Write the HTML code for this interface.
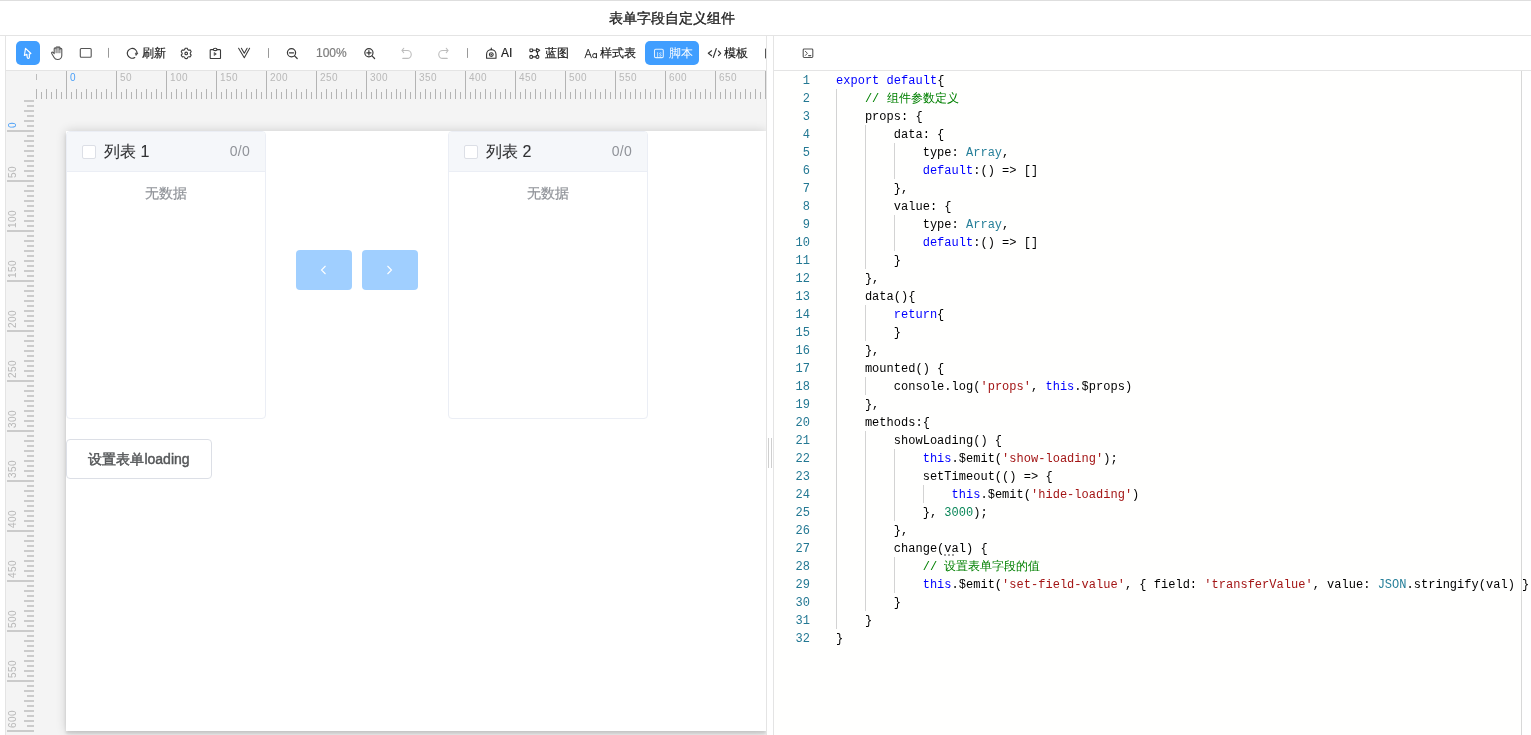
<!DOCTYPE html><html><head><meta charset="utf-8"><title>表单字段自定义组件</title><style>
*{box-sizing:border-box}
html,body{margin:0;padding:0}
body{width:1531px;height:735px;overflow:hidden;position:relative;background:#fff;font-family:"Liberation Sans",sans-serif;color:#333}
.abs{position:absolute}
.hl{position:absolute;height:1px;background:#e4e4e4}
.vl{position:absolute;width:1px;background:#e4e4e4}
.tb{position:absolute;font-size:12px;line-height:14px;color:#222;white-space:nowrap;-webkit-text-stroke:0.2px currentColor}
.ic{position:absolute}
.rt{position:absolute;background:#b4b4b4}
.rl{position:absolute;font-size:10px;line-height:10px;color:#b8b8b8;white-space:nowrap;letter-spacing:0.45px}
.code{position:absolute;left:0;font-family:"Liberation Mono",monospace;font-size:12px;line-height:18px;height:18px;white-space:pre;color:#000;letter-spacing:0.02px}
.ln{position:absolute;left:774px;width:36px;text-align:right;font-family:"Liberation Mono",monospace;font-size:12px;line-height:18px;color:#237893}
.k{color:#0000ff}.c{color:#008000}.s{color:#a31515}.y{color:#267f99}.n{color:#098658}
.g{position:absolute;width:1px;background:#d3d3d3}
</style></head><body><div id="root" style="position:absolute;left:0;top:0;width:1531px;height:735px;will-change:transform">
<div class="hl" style="left:0;top:0;width:1531px;background:#dedede"></div>
<div class="abs" style="left:609px;top:9px;font-size:14px;line-height:18px;color:#262626;-webkit-text-stroke:0.35px #262626;white-space:nowrap">表单字段自定义组件</div>
<div class="hl" style="left:0;top:35px;width:1531px"></div>
<div class="vl" style="left:5px;top:35px;height:700px"></div>
<div class="abs" style="left:6px;top:71px;width:760px;height:664px;background:#f4f4f4"></div>
<div class="hl" style="left:5px;top:70px;width:1526px"></div>
<div class="abs" style="left:66px;top:131px;width:700px;height:600px;background:#fff;box-shadow:0 0 10px rgba(0,0,0,0.16),0 3px 3px rgba(0,0,0,0.12)"></div>
<div class="rt" style="left:36px;top:89px;width:1px;height:10px"></div>
<div class="rt" style="left:41px;top:92px;width:1px;height:7px"></div>
<div class="rt" style="left:46px;top:89px;width:1px;height:10px"></div>
<div class="rt" style="left:51px;top:92px;width:1px;height:7px"></div>
<div class="rt" style="left:56px;top:89px;width:1px;height:10px"></div>
<div class="rt" style="left:61px;top:92px;width:1px;height:7px"></div>
<div class="rt" style="left:66px;top:71px;width:1px;height:28px"></div>
<div class="rl" style="left:70px;top:73px;color:#4a9ff7">0</div>
<div class="rt" style="left:71px;top:92px;width:1px;height:7px"></div>
<div class="rt" style="left:76px;top:89px;width:1px;height:10px"></div>
<div class="rt" style="left:81px;top:92px;width:1px;height:7px"></div>
<div class="rt" style="left:86px;top:89px;width:1px;height:10px"></div>
<div class="rt" style="left:91px;top:92px;width:1px;height:7px"></div>
<div class="rt" style="left:96px;top:89px;width:1px;height:10px"></div>
<div class="rt" style="left:101px;top:92px;width:1px;height:7px"></div>
<div class="rt" style="left:106px;top:89px;width:1px;height:10px"></div>
<div class="rt" style="left:111px;top:92px;width:1px;height:7px"></div>
<div class="rt" style="left:116px;top:71px;width:1px;height:28px"></div>
<div class="rl" style="left:120px;top:73px;color:#b8b8b8">50</div>
<div class="rt" style="left:121px;top:92px;width:1px;height:7px"></div>
<div class="rt" style="left:126px;top:89px;width:1px;height:10px"></div>
<div class="rt" style="left:131px;top:92px;width:1px;height:7px"></div>
<div class="rt" style="left:136px;top:89px;width:1px;height:10px"></div>
<div class="rt" style="left:141px;top:92px;width:1px;height:7px"></div>
<div class="rt" style="left:146px;top:89px;width:1px;height:10px"></div>
<div class="rt" style="left:151px;top:92px;width:1px;height:7px"></div>
<div class="rt" style="left:156px;top:89px;width:1px;height:10px"></div>
<div class="rt" style="left:161px;top:92px;width:1px;height:7px"></div>
<div class="rt" style="left:166px;top:71px;width:1px;height:28px"></div>
<div class="rl" style="left:170px;top:73px;color:#b8b8b8">100</div>
<div class="rt" style="left:171px;top:92px;width:1px;height:7px"></div>
<div class="rt" style="left:176px;top:89px;width:1px;height:10px"></div>
<div class="rt" style="left:181px;top:92px;width:1px;height:7px"></div>
<div class="rt" style="left:186px;top:89px;width:1px;height:10px"></div>
<div class="rt" style="left:191px;top:92px;width:1px;height:7px"></div>
<div class="rt" style="left:196px;top:89px;width:1px;height:10px"></div>
<div class="rt" style="left:201px;top:92px;width:1px;height:7px"></div>
<div class="rt" style="left:206px;top:89px;width:1px;height:10px"></div>
<div class="rt" style="left:211px;top:92px;width:1px;height:7px"></div>
<div class="rt" style="left:216px;top:71px;width:1px;height:28px"></div>
<div class="rl" style="left:220px;top:73px;color:#b8b8b8">150</div>
<div class="rt" style="left:221px;top:92px;width:1px;height:7px"></div>
<div class="rt" style="left:226px;top:89px;width:1px;height:10px"></div>
<div class="rt" style="left:231px;top:92px;width:1px;height:7px"></div>
<div class="rt" style="left:236px;top:89px;width:1px;height:10px"></div>
<div class="rt" style="left:241px;top:92px;width:1px;height:7px"></div>
<div class="rt" style="left:246px;top:89px;width:1px;height:10px"></div>
<div class="rt" style="left:251px;top:92px;width:1px;height:7px"></div>
<div class="rt" style="left:256px;top:89px;width:1px;height:10px"></div>
<div class="rt" style="left:261px;top:92px;width:1px;height:7px"></div>
<div class="rt" style="left:266px;top:71px;width:1px;height:28px"></div>
<div class="rl" style="left:270px;top:73px;color:#b8b8b8">200</div>
<div class="rt" style="left:271px;top:92px;width:1px;height:7px"></div>
<div class="rt" style="left:276px;top:89px;width:1px;height:10px"></div>
<div class="rt" style="left:281px;top:92px;width:1px;height:7px"></div>
<div class="rt" style="left:286px;top:89px;width:1px;height:10px"></div>
<div class="rt" style="left:291px;top:92px;width:1px;height:7px"></div>
<div class="rt" style="left:296px;top:89px;width:1px;height:10px"></div>
<div class="rt" style="left:301px;top:92px;width:1px;height:7px"></div>
<div class="rt" style="left:306px;top:89px;width:1px;height:10px"></div>
<div class="rt" style="left:311px;top:92px;width:1px;height:7px"></div>
<div class="rt" style="left:316px;top:71px;width:1px;height:28px"></div>
<div class="rl" style="left:320px;top:73px;color:#b8b8b8">250</div>
<div class="rt" style="left:321px;top:92px;width:1px;height:7px"></div>
<div class="rt" style="left:326px;top:89px;width:1px;height:10px"></div>
<div class="rt" style="left:331px;top:92px;width:1px;height:7px"></div>
<div class="rt" style="left:336px;top:89px;width:1px;height:10px"></div>
<div class="rt" style="left:341px;top:92px;width:1px;height:7px"></div>
<div class="rt" style="left:346px;top:89px;width:1px;height:10px"></div>
<div class="rt" style="left:351px;top:92px;width:1px;height:7px"></div>
<div class="rt" style="left:356px;top:89px;width:1px;height:10px"></div>
<div class="rt" style="left:361px;top:92px;width:1px;height:7px"></div>
<div class="rt" style="left:366px;top:71px;width:1px;height:28px"></div>
<div class="rl" style="left:370px;top:73px;color:#b8b8b8">300</div>
<div class="rt" style="left:371px;top:92px;width:1px;height:7px"></div>
<div class="rt" style="left:376px;top:89px;width:1px;height:10px"></div>
<div class="rt" style="left:381px;top:92px;width:1px;height:7px"></div>
<div class="rt" style="left:386px;top:89px;width:1px;height:10px"></div>
<div class="rt" style="left:391px;top:92px;width:1px;height:7px"></div>
<div class="rt" style="left:396px;top:89px;width:1px;height:10px"></div>
<div class="rt" style="left:400px;top:92px;width:1px;height:7px"></div>
<div class="rt" style="left:405px;top:89px;width:1px;height:10px"></div>
<div class="rt" style="left:410px;top:92px;width:1px;height:7px"></div>
<div class="rt" style="left:415px;top:71px;width:1px;height:28px"></div>
<div class="rl" style="left:419px;top:73px;color:#b8b8b8">350</div>
<div class="rt" style="left:420px;top:92px;width:1px;height:7px"></div>
<div class="rt" style="left:425px;top:89px;width:1px;height:10px"></div>
<div class="rt" style="left:430px;top:92px;width:1px;height:7px"></div>
<div class="rt" style="left:435px;top:89px;width:1px;height:10px"></div>
<div class="rt" style="left:440px;top:92px;width:1px;height:7px"></div>
<div class="rt" style="left:445px;top:89px;width:1px;height:10px"></div>
<div class="rt" style="left:450px;top:92px;width:1px;height:7px"></div>
<div class="rt" style="left:455px;top:89px;width:1px;height:10px"></div>
<div class="rt" style="left:460px;top:92px;width:1px;height:7px"></div>
<div class="rt" style="left:465px;top:71px;width:1px;height:28px"></div>
<div class="rl" style="left:469px;top:73px;color:#b8b8b8">400</div>
<div class="rt" style="left:470px;top:92px;width:1px;height:7px"></div>
<div class="rt" style="left:475px;top:89px;width:1px;height:10px"></div>
<div class="rt" style="left:480px;top:92px;width:1px;height:7px"></div>
<div class="rt" style="left:485px;top:89px;width:1px;height:10px"></div>
<div class="rt" style="left:490px;top:92px;width:1px;height:7px"></div>
<div class="rt" style="left:495px;top:89px;width:1px;height:10px"></div>
<div class="rt" style="left:500px;top:92px;width:1px;height:7px"></div>
<div class="rt" style="left:505px;top:89px;width:1px;height:10px"></div>
<div class="rt" style="left:510px;top:92px;width:1px;height:7px"></div>
<div class="rt" style="left:515px;top:71px;width:1px;height:28px"></div>
<div class="rl" style="left:519px;top:73px;color:#b8b8b8">450</div>
<div class="rt" style="left:520px;top:92px;width:1px;height:7px"></div>
<div class="rt" style="left:525px;top:89px;width:1px;height:10px"></div>
<div class="rt" style="left:530px;top:92px;width:1px;height:7px"></div>
<div class="rt" style="left:535px;top:89px;width:1px;height:10px"></div>
<div class="rt" style="left:540px;top:92px;width:1px;height:7px"></div>
<div class="rt" style="left:545px;top:89px;width:1px;height:10px"></div>
<div class="rt" style="left:550px;top:92px;width:1px;height:7px"></div>
<div class="rt" style="left:555px;top:89px;width:1px;height:10px"></div>
<div class="rt" style="left:560px;top:92px;width:1px;height:7px"></div>
<div class="rt" style="left:565px;top:71px;width:1px;height:28px"></div>
<div class="rl" style="left:569px;top:73px;color:#b8b8b8">500</div>
<div class="rt" style="left:570px;top:92px;width:1px;height:7px"></div>
<div class="rt" style="left:575px;top:89px;width:1px;height:10px"></div>
<div class="rt" style="left:580px;top:92px;width:1px;height:7px"></div>
<div class="rt" style="left:585px;top:89px;width:1px;height:10px"></div>
<div class="rt" style="left:590px;top:92px;width:1px;height:7px"></div>
<div class="rt" style="left:595px;top:89px;width:1px;height:10px"></div>
<div class="rt" style="left:600px;top:92px;width:1px;height:7px"></div>
<div class="rt" style="left:605px;top:89px;width:1px;height:10px"></div>
<div class="rt" style="left:610px;top:92px;width:1px;height:7px"></div>
<div class="rt" style="left:615px;top:71px;width:1px;height:28px"></div>
<div class="rl" style="left:619px;top:73px;color:#b8b8b8">550</div>
<div class="rt" style="left:620px;top:92px;width:1px;height:7px"></div>
<div class="rt" style="left:625px;top:89px;width:1px;height:10px"></div>
<div class="rt" style="left:630px;top:92px;width:1px;height:7px"></div>
<div class="rt" style="left:635px;top:89px;width:1px;height:10px"></div>
<div class="rt" style="left:640px;top:92px;width:1px;height:7px"></div>
<div class="rt" style="left:645px;top:89px;width:1px;height:10px"></div>
<div class="rt" style="left:650px;top:92px;width:1px;height:7px"></div>
<div class="rt" style="left:655px;top:89px;width:1px;height:10px"></div>
<div class="rt" style="left:660px;top:92px;width:1px;height:7px"></div>
<div class="rt" style="left:665px;top:71px;width:1px;height:28px"></div>
<div class="rl" style="left:669px;top:73px;color:#b8b8b8">600</div>
<div class="rt" style="left:670px;top:92px;width:1px;height:7px"></div>
<div class="rt" style="left:675px;top:89px;width:1px;height:10px"></div>
<div class="rt" style="left:680px;top:92px;width:1px;height:7px"></div>
<div class="rt" style="left:685px;top:89px;width:1px;height:10px"></div>
<div class="rt" style="left:690px;top:92px;width:1px;height:7px"></div>
<div class="rt" style="left:695px;top:89px;width:1px;height:10px"></div>
<div class="rt" style="left:700px;top:92px;width:1px;height:7px"></div>
<div class="rt" style="left:705px;top:89px;width:1px;height:10px"></div>
<div class="rt" style="left:710px;top:92px;width:1px;height:7px"></div>
<div class="rt" style="left:715px;top:71px;width:1px;height:28px"></div>
<div class="rl" style="left:719px;top:73px;color:#b8b8b8">650</div>
<div class="rt" style="left:720px;top:92px;width:1px;height:7px"></div>
<div class="rt" style="left:725px;top:89px;width:1px;height:10px"></div>
<div class="rt" style="left:730px;top:92px;width:1px;height:7px"></div>
<div class="rt" style="left:735px;top:89px;width:1px;height:10px"></div>
<div class="rt" style="left:740px;top:92px;width:1px;height:7px"></div>
<div class="rt" style="left:745px;top:89px;width:1px;height:10px"></div>
<div class="rt" style="left:750px;top:92px;width:1px;height:7px"></div>
<div class="rt" style="left:755px;top:89px;width:1px;height:10px"></div>
<div class="rt" style="left:760px;top:92px;width:1px;height:7px"></div>
<div class="rt" style="left:765px;top:71px;width:1px;height:28px"></div>
<div class="rt" style="left:36px;top:74px;width:1px;height:6px;background:#bcbcbc"></div>
<div class="rt" style="left:24px;top:100px;width:10px;height:2px;background:#cbcbcb"></div>
<div class="rt" style="left:27px;top:105px;width:7px;height:2px;background:#cbcbcb"></div>
<div class="rt" style="left:24px;top:110px;width:10px;height:2px;background:#cbcbcb"></div>
<div class="rt" style="left:27px;top:115px;width:7px;height:2px;background:#cbcbcb"></div>
<div class="rt" style="left:24px;top:120px;width:10px;height:2px;background:#cbcbcb"></div>
<div class="rt" style="left:27px;top:125px;width:7px;height:2px;background:#cbcbcb"></div>
<div class="rt" style="left:7px;top:130px;width:27px;height:2px;background:#cbcbcb"></div>
<div class="rl" style="left:8px;top:128px;color:#4a9ff7;transform-origin:0 0;transform:rotate(-90deg)">0</div>
<div class="rt" style="left:27px;top:135px;width:7px;height:2px;background:#cbcbcb"></div>
<div class="rt" style="left:24px;top:140px;width:10px;height:2px;background:#cbcbcb"></div>
<div class="rt" style="left:27px;top:145px;width:7px;height:2px;background:#cbcbcb"></div>
<div class="rt" style="left:24px;top:150px;width:10px;height:2px;background:#cbcbcb"></div>
<div class="rt" style="left:27px;top:155px;width:7px;height:2px;background:#cbcbcb"></div>
<div class="rt" style="left:24px;top:160px;width:10px;height:2px;background:#cbcbcb"></div>
<div class="rt" style="left:27px;top:165px;width:7px;height:2px;background:#cbcbcb"></div>
<div class="rt" style="left:24px;top:170px;width:10px;height:2px;background:#cbcbcb"></div>
<div class="rt" style="left:27px;top:175px;width:7px;height:2px;background:#cbcbcb"></div>
<div class="rt" style="left:7px;top:180px;width:27px;height:2px;background:#cbcbcb"></div>
<div class="rl" style="left:8px;top:178px;color:#b8b8b8;transform-origin:0 0;transform:rotate(-90deg)">50</div>
<div class="rt" style="left:27px;top:185px;width:7px;height:2px;background:#cbcbcb"></div>
<div class="rt" style="left:24px;top:190px;width:10px;height:2px;background:#cbcbcb"></div>
<div class="rt" style="left:27px;top:195px;width:7px;height:2px;background:#cbcbcb"></div>
<div class="rt" style="left:24px;top:200px;width:10px;height:2px;background:#cbcbcb"></div>
<div class="rt" style="left:27px;top:205px;width:7px;height:2px;background:#cbcbcb"></div>
<div class="rt" style="left:24px;top:210px;width:10px;height:2px;background:#cbcbcb"></div>
<div class="rt" style="left:27px;top:215px;width:7px;height:2px;background:#cbcbcb"></div>
<div class="rt" style="left:24px;top:220px;width:10px;height:2px;background:#cbcbcb"></div>
<div class="rt" style="left:27px;top:225px;width:7px;height:2px;background:#cbcbcb"></div>
<div class="rt" style="left:7px;top:230px;width:27px;height:2px;background:#cbcbcb"></div>
<div class="rl" style="left:8px;top:228px;color:#b8b8b8;transform-origin:0 0;transform:rotate(-90deg)">100</div>
<div class="rt" style="left:27px;top:235px;width:7px;height:2px;background:#cbcbcb"></div>
<div class="rt" style="left:24px;top:240px;width:10px;height:2px;background:#cbcbcb"></div>
<div class="rt" style="left:27px;top:245px;width:7px;height:2px;background:#cbcbcb"></div>
<div class="rt" style="left:24px;top:250px;width:10px;height:2px;background:#cbcbcb"></div>
<div class="rt" style="left:27px;top:255px;width:7px;height:2px;background:#cbcbcb"></div>
<div class="rt" style="left:24px;top:260px;width:10px;height:2px;background:#cbcbcb"></div>
<div class="rt" style="left:27px;top:265px;width:7px;height:2px;background:#cbcbcb"></div>
<div class="rt" style="left:24px;top:270px;width:10px;height:2px;background:#cbcbcb"></div>
<div class="rt" style="left:27px;top:275px;width:7px;height:2px;background:#cbcbcb"></div>
<div class="rt" style="left:7px;top:280px;width:27px;height:2px;background:#cbcbcb"></div>
<div class="rl" style="left:8px;top:278px;color:#b8b8b8;transform-origin:0 0;transform:rotate(-90deg)">150</div>
<div class="rt" style="left:27px;top:285px;width:7px;height:2px;background:#cbcbcb"></div>
<div class="rt" style="left:24px;top:290px;width:10px;height:2px;background:#cbcbcb"></div>
<div class="rt" style="left:27px;top:295px;width:7px;height:2px;background:#cbcbcb"></div>
<div class="rt" style="left:24px;top:300px;width:10px;height:2px;background:#cbcbcb"></div>
<div class="rt" style="left:27px;top:305px;width:7px;height:2px;background:#cbcbcb"></div>
<div class="rt" style="left:24px;top:310px;width:10px;height:2px;background:#cbcbcb"></div>
<div class="rt" style="left:27px;top:315px;width:7px;height:2px;background:#cbcbcb"></div>
<div class="rt" style="left:24px;top:320px;width:10px;height:2px;background:#cbcbcb"></div>
<div class="rt" style="left:27px;top:325px;width:7px;height:2px;background:#cbcbcb"></div>
<div class="rt" style="left:7px;top:330px;width:27px;height:2px;background:#cbcbcb"></div>
<div class="rl" style="left:8px;top:328px;color:#b8b8b8;transform-origin:0 0;transform:rotate(-90deg)">200</div>
<div class="rt" style="left:27px;top:335px;width:7px;height:2px;background:#cbcbcb"></div>
<div class="rt" style="left:24px;top:340px;width:10px;height:2px;background:#cbcbcb"></div>
<div class="rt" style="left:27px;top:345px;width:7px;height:2px;background:#cbcbcb"></div>
<div class="rt" style="left:24px;top:350px;width:10px;height:2px;background:#cbcbcb"></div>
<div class="rt" style="left:27px;top:355px;width:7px;height:2px;background:#cbcbcb"></div>
<div class="rt" style="left:24px;top:360px;width:10px;height:2px;background:#cbcbcb"></div>
<div class="rt" style="left:27px;top:365px;width:7px;height:2px;background:#cbcbcb"></div>
<div class="rt" style="left:24px;top:370px;width:10px;height:2px;background:#cbcbcb"></div>
<div class="rt" style="left:27px;top:375px;width:7px;height:2px;background:#cbcbcb"></div>
<div class="rt" style="left:7px;top:380px;width:27px;height:2px;background:#cbcbcb"></div>
<div class="rl" style="left:8px;top:378px;color:#b8b8b8;transform-origin:0 0;transform:rotate(-90deg)">250</div>
<div class="rt" style="left:27px;top:385px;width:7px;height:2px;background:#cbcbcb"></div>
<div class="rt" style="left:24px;top:390px;width:10px;height:2px;background:#cbcbcb"></div>
<div class="rt" style="left:27px;top:395px;width:7px;height:2px;background:#cbcbcb"></div>
<div class="rt" style="left:24px;top:400px;width:10px;height:2px;background:#cbcbcb"></div>
<div class="rt" style="left:27px;top:405px;width:7px;height:2px;background:#cbcbcb"></div>
<div class="rt" style="left:24px;top:410px;width:10px;height:2px;background:#cbcbcb"></div>
<div class="rt" style="left:27px;top:415px;width:7px;height:2px;background:#cbcbcb"></div>
<div class="rt" style="left:24px;top:420px;width:10px;height:2px;background:#cbcbcb"></div>
<div class="rt" style="left:27px;top:425px;width:7px;height:2px;background:#cbcbcb"></div>
<div class="rt" style="left:7px;top:430px;width:27px;height:2px;background:#cbcbcb"></div>
<div class="rl" style="left:8px;top:428px;color:#b8b8b8;transform-origin:0 0;transform:rotate(-90deg)">300</div>
<div class="rt" style="left:27px;top:435px;width:7px;height:2px;background:#cbcbcb"></div>
<div class="rt" style="left:24px;top:440px;width:10px;height:2px;background:#cbcbcb"></div>
<div class="rt" style="left:27px;top:445px;width:7px;height:2px;background:#cbcbcb"></div>
<div class="rt" style="left:24px;top:450px;width:10px;height:2px;background:#cbcbcb"></div>
<div class="rt" style="left:27px;top:455px;width:7px;height:2px;background:#cbcbcb"></div>
<div class="rt" style="left:24px;top:460px;width:10px;height:2px;background:#cbcbcb"></div>
<div class="rt" style="left:27px;top:465px;width:7px;height:2px;background:#cbcbcb"></div>
<div class="rt" style="left:24px;top:470px;width:10px;height:2px;background:#cbcbcb"></div>
<div class="rt" style="left:27px;top:475px;width:7px;height:2px;background:#cbcbcb"></div>
<div class="rt" style="left:7px;top:480px;width:27px;height:2px;background:#cbcbcb"></div>
<div class="rl" style="left:8px;top:478px;color:#b8b8b8;transform-origin:0 0;transform:rotate(-90deg)">350</div>
<div class="rt" style="left:27px;top:485px;width:7px;height:2px;background:#cbcbcb"></div>
<div class="rt" style="left:24px;top:490px;width:10px;height:2px;background:#cbcbcb"></div>
<div class="rt" style="left:27px;top:495px;width:7px;height:2px;background:#cbcbcb"></div>
<div class="rt" style="left:24px;top:500px;width:10px;height:2px;background:#cbcbcb"></div>
<div class="rt" style="left:27px;top:505px;width:7px;height:2px;background:#cbcbcb"></div>
<div class="rt" style="left:24px;top:510px;width:10px;height:2px;background:#cbcbcb"></div>
<div class="rt" style="left:27px;top:515px;width:7px;height:2px;background:#cbcbcb"></div>
<div class="rt" style="left:24px;top:520px;width:10px;height:2px;background:#cbcbcb"></div>
<div class="rt" style="left:27px;top:525px;width:7px;height:2px;background:#cbcbcb"></div>
<div class="rt" style="left:7px;top:530px;width:27px;height:2px;background:#cbcbcb"></div>
<div class="rl" style="left:8px;top:528px;color:#b8b8b8;transform-origin:0 0;transform:rotate(-90deg)">400</div>
<div class="rt" style="left:27px;top:535px;width:7px;height:2px;background:#cbcbcb"></div>
<div class="rt" style="left:24px;top:540px;width:10px;height:2px;background:#cbcbcb"></div>
<div class="rt" style="left:27px;top:545px;width:7px;height:2px;background:#cbcbcb"></div>
<div class="rt" style="left:24px;top:550px;width:10px;height:2px;background:#cbcbcb"></div>
<div class="rt" style="left:27px;top:555px;width:7px;height:2px;background:#cbcbcb"></div>
<div class="rt" style="left:24px;top:560px;width:10px;height:2px;background:#cbcbcb"></div>
<div class="rt" style="left:27px;top:565px;width:7px;height:2px;background:#cbcbcb"></div>
<div class="rt" style="left:24px;top:570px;width:10px;height:2px;background:#cbcbcb"></div>
<div class="rt" style="left:27px;top:575px;width:7px;height:2px;background:#cbcbcb"></div>
<div class="rt" style="left:7px;top:580px;width:27px;height:2px;background:#cbcbcb"></div>
<div class="rl" style="left:8px;top:578px;color:#b8b8b8;transform-origin:0 0;transform:rotate(-90deg)">450</div>
<div class="rt" style="left:27px;top:585px;width:7px;height:2px;background:#cbcbcb"></div>
<div class="rt" style="left:24px;top:590px;width:10px;height:2px;background:#cbcbcb"></div>
<div class="rt" style="left:27px;top:595px;width:7px;height:2px;background:#cbcbcb"></div>
<div class="rt" style="left:24px;top:600px;width:10px;height:2px;background:#cbcbcb"></div>
<div class="rt" style="left:27px;top:605px;width:7px;height:2px;background:#cbcbcb"></div>
<div class="rt" style="left:24px;top:610px;width:10px;height:2px;background:#cbcbcb"></div>
<div class="rt" style="left:27px;top:615px;width:7px;height:2px;background:#cbcbcb"></div>
<div class="rt" style="left:24px;top:620px;width:10px;height:2px;background:#cbcbcb"></div>
<div class="rt" style="left:27px;top:625px;width:7px;height:2px;background:#cbcbcb"></div>
<div class="rt" style="left:7px;top:630px;width:27px;height:2px;background:#cbcbcb"></div>
<div class="rl" style="left:8px;top:628px;color:#b8b8b8;transform-origin:0 0;transform:rotate(-90deg)">500</div>
<div class="rt" style="left:27px;top:635px;width:7px;height:2px;background:#cbcbcb"></div>
<div class="rt" style="left:24px;top:640px;width:10px;height:2px;background:#cbcbcb"></div>
<div class="rt" style="left:27px;top:645px;width:7px;height:2px;background:#cbcbcb"></div>
<div class="rt" style="left:24px;top:650px;width:10px;height:2px;background:#cbcbcb"></div>
<div class="rt" style="left:27px;top:655px;width:7px;height:2px;background:#cbcbcb"></div>
<div class="rt" style="left:24px;top:660px;width:10px;height:2px;background:#cbcbcb"></div>
<div class="rt" style="left:27px;top:665px;width:7px;height:2px;background:#cbcbcb"></div>
<div class="rt" style="left:24px;top:670px;width:10px;height:2px;background:#cbcbcb"></div>
<div class="rt" style="left:27px;top:675px;width:7px;height:2px;background:#cbcbcb"></div>
<div class="rt" style="left:7px;top:680px;width:27px;height:2px;background:#cbcbcb"></div>
<div class="rl" style="left:8px;top:678px;color:#b8b8b8;transform-origin:0 0;transform:rotate(-90deg)">550</div>
<div class="rt" style="left:27px;top:685px;width:7px;height:2px;background:#cbcbcb"></div>
<div class="rt" style="left:24px;top:690px;width:10px;height:2px;background:#cbcbcb"></div>
<div class="rt" style="left:27px;top:695px;width:7px;height:2px;background:#cbcbcb"></div>
<div class="rt" style="left:24px;top:700px;width:10px;height:2px;background:#cbcbcb"></div>
<div class="rt" style="left:27px;top:705px;width:7px;height:2px;background:#cbcbcb"></div>
<div class="rt" style="left:24px;top:710px;width:10px;height:2px;background:#cbcbcb"></div>
<div class="rt" style="left:27px;top:715px;width:7px;height:2px;background:#cbcbcb"></div>
<div class="rt" style="left:24px;top:720px;width:10px;height:2px;background:#cbcbcb"></div>
<div class="rt" style="left:27px;top:725px;width:7px;height:2px;background:#cbcbcb"></div>
<div class="rt" style="left:7px;top:730px;width:27px;height:2px;background:#cbcbcb"></div>
<div class="rl" style="left:8px;top:728px;color:#b8b8b8;transform-origin:0 0;transform:rotate(-90deg)">600</div>
<div class="abs" style="left:66px;top:131px;width:200px;height:288px;border:1px solid #ebeef5;border-radius:4px;background:#fff;overflow:hidden"><div class="abs" style="left:0;top:0;width:198px;height:40px;background:#f5f7fa;border-bottom:1px solid #ebeef5"></div><div class="abs" style="left:15px;top:13px;width:14px;height:14px;border:1px solid #dcdfe6;border-radius:2px;background:#fff"></div><div class="abs" style="left:37px;top:10px;font-size:16px;line-height:20px;color:#303133;-webkit-text-stroke:0.1px #303133;white-space:nowrap">列表 1</div><div class="abs" style="right:15px;top:12px;font-size:14px;line-height:15px;color:#909399;letter-spacing:0.3px">0/0</div><div class="abs" style="left:0;top:46px;width:198px;text-align:center;font-size:14px;line-height:30px;color:#909399;-webkit-text-stroke:0.2px #909399">无数据</div></div>
<div class="abs" style="left:448px;top:131px;width:200px;height:288px;border:1px solid #ebeef5;border-radius:4px;background:#fff;overflow:hidden"><div class="abs" style="left:0;top:0;width:198px;height:40px;background:#f5f7fa;border-bottom:1px solid #ebeef5"></div><div class="abs" style="left:15px;top:13px;width:14px;height:14px;border:1px solid #dcdfe6;border-radius:2px;background:#fff"></div><div class="abs" style="left:37px;top:10px;font-size:16px;line-height:20px;color:#303133;-webkit-text-stroke:0.1px #303133;white-space:nowrap">列表 2</div><div class="abs" style="right:15px;top:12px;font-size:14px;line-height:15px;color:#909399;letter-spacing:0.3px">0/0</div><div class="abs" style="left:0;top:46px;width:198px;text-align:center;font-size:14px;line-height:30px;color:#909399;-webkit-text-stroke:0.2px #909399">无数据</div></div>
<div class="abs" style="left:296px;top:250px;width:56px;height:40px;background:#a0cfff;border-radius:4px"><svg class="abs" style="left:24px;top:15px" width="7" height="10" viewBox="0 0 7 10" fill="none" stroke="#fff" stroke-width="1.1"><path d="M5.5 1 L1.5 5 L5.5 9" /></svg></div>
<div class="abs" style="left:362px;top:250px;width:56px;height:40px;background:#a0cfff;border-radius:4px"><svg class="abs" style="left:24px;top:15px" width="7" height="10" viewBox="0 0 7 10" fill="none" stroke="#fff" stroke-width="1.1"><path d="M1.5 1 L5.5 5 L1.5 9" /></svg></div>
<div class="abs" style="left:66px;top:439px;width:146px;height:40px;border:1px solid #dcdfe6;border-radius:4px;background:#fff;text-align:center;font-size:14px;line-height:38px;color:#555759;-webkit-text-stroke:0.45px #555759">设置表单loading</div>
<div class="vl" style="left:766px;top:35px;height:700px"></div>
<div class="vl" style="left:773px;top:35px;height:700px"></div>
<div class="abs" style="left:767px;top:36px;width:6px;height:699px;background:#fff"></div>
<div class="vl" style="left:768px;top:438px;height:30px;background:#cfcfcf"></div>
<div class="vl" style="left:771px;top:438px;height:30px;background:#cfcfcf"></div>
<div class="abs" style="left:774px;top:71px;width:757px;height:664px;background:#fffffe"></div>
<div class="g" style="left:836px;top:89px;height:18px"></div>
<div class="g" style="left:836px;top:107px;height:18px"></div>
<div class="g" style="left:836px;top:125px;height:18px"></div>
<div class="g" style="left:865px;top:125px;height:18px"></div>
<div class="g" style="left:836px;top:143px;height:18px"></div>
<div class="g" style="left:865px;top:143px;height:18px"></div>
<div class="g" style="left:894px;top:143px;height:18px"></div>
<div class="g" style="left:836px;top:161px;height:18px"></div>
<div class="g" style="left:865px;top:161px;height:18px"></div>
<div class="g" style="left:894px;top:161px;height:18px"></div>
<div class="g" style="left:836px;top:179px;height:18px"></div>
<div class="g" style="left:865px;top:179px;height:18px"></div>
<div class="g" style="left:836px;top:197px;height:18px"></div>
<div class="g" style="left:865px;top:197px;height:18px"></div>
<div class="g" style="left:836px;top:215px;height:18px"></div>
<div class="g" style="left:865px;top:215px;height:18px"></div>
<div class="g" style="left:894px;top:215px;height:18px"></div>
<div class="g" style="left:836px;top:233px;height:18px"></div>
<div class="g" style="left:865px;top:233px;height:18px"></div>
<div class="g" style="left:894px;top:233px;height:18px"></div>
<div class="g" style="left:836px;top:251px;height:18px"></div>
<div class="g" style="left:865px;top:251px;height:18px"></div>
<div class="g" style="left:836px;top:269px;height:18px"></div>
<div class="g" style="left:836px;top:287px;height:18px"></div>
<div class="g" style="left:836px;top:305px;height:18px"></div>
<div class="g" style="left:865px;top:305px;height:18px"></div>
<div class="g" style="left:836px;top:323px;height:18px"></div>
<div class="g" style="left:865px;top:323px;height:18px"></div>
<div class="g" style="left:836px;top:341px;height:18px"></div>
<div class="g" style="left:836px;top:359px;height:18px"></div>
<div class="g" style="left:836px;top:377px;height:18px"></div>
<div class="g" style="left:865px;top:377px;height:18px"></div>
<div class="g" style="left:836px;top:395px;height:18px"></div>
<div class="g" style="left:836px;top:413px;height:18px"></div>
<div class="g" style="left:836px;top:431px;height:18px"></div>
<div class="g" style="left:865px;top:431px;height:18px"></div>
<div class="g" style="left:836px;top:449px;height:18px"></div>
<div class="g" style="left:865px;top:449px;height:18px"></div>
<div class="g" style="left:894px;top:449px;height:18px"></div>
<div class="g" style="left:836px;top:467px;height:18px"></div>
<div class="g" style="left:865px;top:467px;height:18px"></div>
<div class="g" style="left:894px;top:467px;height:18px"></div>
<div class="g" style="left:836px;top:485px;height:18px"></div>
<div class="g" style="left:865px;top:485px;height:18px"></div>
<div class="g" style="left:894px;top:485px;height:18px"></div>
<div class="g" style="left:923px;top:485px;height:18px"></div>
<div class="g" style="left:836px;top:503px;height:18px"></div>
<div class="g" style="left:865px;top:503px;height:18px"></div>
<div class="g" style="left:894px;top:503px;height:18px"></div>
<div class="g" style="left:836px;top:521px;height:18px"></div>
<div class="g" style="left:865px;top:521px;height:18px"></div>
<div class="g" style="left:836px;top:539px;height:18px"></div>
<div class="g" style="left:865px;top:539px;height:18px"></div>
<div class="g" style="left:836px;top:557px;height:18px"></div>
<div class="g" style="left:865px;top:557px;height:18px"></div>
<div class="g" style="left:894px;top:557px;height:18px"></div>
<div class="g" style="left:836px;top:575px;height:18px"></div>
<div class="g" style="left:865px;top:575px;height:18px"></div>
<div class="g" style="left:894px;top:575px;height:18px"></div>
<div class="g" style="left:836px;top:593px;height:18px"></div>
<div class="g" style="left:865px;top:593px;height:18px"></div>
<div class="g" style="left:836px;top:611px;height:18px"></div>
<div class="ln" style="top:72px">1</div>
<div class="code" style="left:836px;top:72px"><span class="k">export</span> <span class="k">default</span>{</div>
<div class="ln" style="top:90px">2</div>
<div class="code" style="left:836px;top:90px">    <span class="c">// 组件参数定义</span></div>
<div class="ln" style="top:108px">3</div>
<div class="code" style="left:836px;top:108px">    props: {</div>
<div class="ln" style="top:126px">4</div>
<div class="code" style="left:836px;top:126px">        data: {</div>
<div class="ln" style="top:144px">5</div>
<div class="code" style="left:836px;top:144px">            type: <span class="y">Array</span>,</div>
<div class="ln" style="top:162px">6</div>
<div class="code" style="left:836px;top:162px">            <span class="k">default</span>:() =&gt; []</div>
<div class="ln" style="top:180px">7</div>
<div class="code" style="left:836px;top:180px">        },</div>
<div class="ln" style="top:198px">8</div>
<div class="code" style="left:836px;top:198px">        value: {</div>
<div class="ln" style="top:216px">9</div>
<div class="code" style="left:836px;top:216px">            type: <span class="y">Array</span>,</div>
<div class="ln" style="top:234px">10</div>
<div class="code" style="left:836px;top:234px">            <span class="k">default</span>:() =&gt; []</div>
<div class="ln" style="top:252px">11</div>
<div class="code" style="left:836px;top:252px">        }</div>
<div class="ln" style="top:270px">12</div>
<div class="code" style="left:836px;top:270px">    },</div>
<div class="ln" style="top:288px">13</div>
<div class="code" style="left:836px;top:288px">    data(){</div>
<div class="ln" style="top:306px">14</div>
<div class="code" style="left:836px;top:306px">        <span class="k">return</span>{</div>
<div class="ln" style="top:324px">15</div>
<div class="code" style="left:836px;top:324px">        }</div>
<div class="ln" style="top:342px">16</div>
<div class="code" style="left:836px;top:342px">    },</div>
<div class="ln" style="top:360px">17</div>
<div class="code" style="left:836px;top:360px">    mounted() {</div>
<div class="ln" style="top:378px">18</div>
<div class="code" style="left:836px;top:378px">        console.log(<span class="s">'props'</span>, <span class="k">this</span>.$props)</div>
<div class="ln" style="top:396px">19</div>
<div class="code" style="left:836px;top:396px">    },</div>
<div class="ln" style="top:414px">20</div>
<div class="code" style="left:836px;top:414px">    methods:{</div>
<div class="ln" style="top:432px">21</div>
<div class="code" style="left:836px;top:432px">        showLoading() {</div>
<div class="ln" style="top:450px">22</div>
<div class="code" style="left:836px;top:450px">            <span class="k">this</span>.$emit(<span class="s">'show-loading'</span>);</div>
<div class="ln" style="top:468px">23</div>
<div class="code" style="left:836px;top:468px">            setTimeout(() =&gt; {</div>
<div class="ln" style="top:486px">24</div>
<div class="code" style="left:836px;top:486px">                <span class="k">this</span>.$emit(<span class="s">'hide-loading'</span>)</div>
<div class="ln" style="top:504px">25</div>
<div class="code" style="left:836px;top:504px">            }, <span class="n">3000</span>);</div>
<div class="ln" style="top:522px">26</div>
<div class="code" style="left:836px;top:522px">        },</div>
<div class="ln" style="top:540px">27</div>
<div class="code" style="left:836px;top:540px">        change(val) {</div>
<div class="ln" style="top:558px">28</div>
<div class="code" style="left:836px;top:558px">            <span class="c">// 设置表单字段的值</span></div>
<div class="ln" style="top:576px">29</div>
<div class="code" style="left:836px;top:576px">            <span class="k">this</span>.$emit(<span class="s">'set-field-value'</span>, { field: <span class="s">'transferValue'</span>, value: <span class="y">JSON</span>.stringify(val) })</div>
<div class="ln" style="top:594px">30</div>
<div class="code" style="left:836px;top:594px">        }</div>
<div class="ln" style="top:612px">31</div>
<div class="code" style="left:836px;top:612px">    }</div>
<div class="ln" style="top:630px">32</div>
<div class="code" style="left:836px;top:630px">}</div>
<div class="abs" style="left:944px;top:554px;width:2px;height:2px;background:#a0a0a0"></div>
<div class="abs" style="left:948px;top:554px;width:2px;height:2px;background:#a0a0a0"></div>
<div class="abs" style="left:952px;top:554px;width:2px;height:2px;background:#a0a0a0"></div>
<div class="vl" style="left:1521px;top:71px;height:664px;background:#d8d8d8"></div>
<div class="abs" style="left:1522px;top:71px;width:9px;height:664px;background:#fff"></div>
<div class="code" style="left:836px;top:576px;clip-path:inset(0 0 0 686px)">            this.$emit('set-field-value', { field: 'transferValue', value: JSON.stringify(val) })</div>
<div class="abs" style="left:16px;top:41px;width:24px;height:24px;background:#409eff;border-radius:5px"></div>
<div class="abs" style="left:645px;top:41px;width:54px;height:24px;background:#409eff;border-radius:5px"></div>
<svg class="abs" style="left:0;top:0" width="830" height="70" viewBox="0 0 830 70" fill="none" stroke-linecap="round" stroke-linejoin="round">
<path d="M25.5 48.3 L24.4 55.5 L26.9 54.3 L27.2 57.3 a1.1 1.1 0 0 0 2.2 0 L29.3 54.1 L30.9 53.5 Z" stroke="#fff" stroke-width="1.15"/>
<g stroke="#555" stroke-width="1.1">
<path d="M54.2 53.6 V48.8 a0.95 0.95 0 0 1 1.9 0 V47.7 a0.95 0.95 0 0 1 1.9 0 V47.8 a0.95 0.95 0 0 1 1.9 0 V49.3 a0.95 0.95 0 0 1 1.9 0 V55.5 a4 4 0 0 1 -4 4 h-0.4 a3.8 3.8 0 0 1 -3.3 -2 L51.6 53.3 a0.85 0.85 0 0 1 1.4 -0.9 Z"/>
<path d="M56.1 48.8 V52.8 M58 47.7 V52.8 M59.9 48 V52.8" stroke-width="0.9"/>
<rect x="80.3" y="48.5" width="10.9" height="8.8" rx="1"/>
</g>
<g stroke="#999" stroke-width="1"><path d="M108.5 48.3 V57.3 M268.5 48.5 V57.5 M467.5 48.5 V57.5"/></g>
<g stroke="#3a3a3a" stroke-width="1.1">
<path d="M134.80 57.46 A4.9 4.9 0 1 1 137.10 53.47"/>
<path d="M137.70 53.49 L136.01 55.50 L135.40 53.41 Z" fill="#3a3a3a" stroke-width="0.6"/>
<path d="M185.12 48.31 A5.2 5.2 0 0 1 187.28 48.31 Q187.75 50.72 190.06 49.92 A5.2 5.2 0 0 1 191.15 51.79 Q189.30 53.40 191.15 55.01 A5.2 5.2 0 0 1 190.06 56.88 Q187.75 56.08 187.28 58.49 A5.2 5.2 0 0 1 185.12 58.49 Q184.65 56.08 182.34 56.88 A5.2 5.2 0 0 1 181.25 55.01 Q183.10 53.40 181.25 51.79 A5.2 5.2 0 0 1 182.34 49.92 Q184.65 50.72 185.12 48.31 Z"/>
<circle cx="186.2" cy="53.4" r="1.3"/>
<path d="M213.3 49.6 H210.8 a0.6 0.6 0 0 0 -0.6 0.6 V57.9 a0.6 0.6 0 0 0 0.6 0.6 H219.9 a0.6 0.6 0 0 0 0.6 -0.6 V50.2 a0.6 0.6 0 0 0 -0.6 -0.6 H217.1"/>
<ellipse cx="215.2" cy="49.4" rx="1.9" ry="1.2"/>
<path d="M214.4 52.6 L216.4 54 L214.4 55.4 Z" fill="#3a3a3a" stroke-width="0.5"/>
<path d="M238.6 48.3 L244.3 57.7 L249.6 48.3 M241.4 48.3 L244.3 53.2 L247.1 48.3" stroke-width="1.05"/>
<circle cx="291.5" cy="52.8" r="4.1" stroke-width="1.2"/>
<path d="M294.6 55.9 L297.2 58.5 M289.4 52.8 H293.6" stroke-width="1.2"/>
<circle cx="368.9" cy="52.8" r="4.1" stroke-width="1.2"/>
<path d="M372 55.9 L374.6 58.5 M366.8 52.8 H371 M368.9 50.7 V54.9" stroke-width="1.2"/>
</g>
<g stroke="#bdbdbd" stroke-width="1.1">
<path d="M402.2 50.5 H407.3 a3.9 3.9 0 0 1 0 7.9 H402.8 M403.7 48.3 L401.9 50.5 L403.7 52.6"/>
<path d="M447.8 50.5 H442.7 a3.9 3.9 0 0 0 0 7.9 H447.2 M446.3 48.3 L448.1 50.5 L446.3 52.6"/>
</g>
<g stroke="#333" stroke-width="1.1">
<path d="M486.6 58.3 V54.3 a4.7 4.7 0 0 1 9.4 0 V58.3 Z"/>
<circle cx="491.3" cy="54.6" r="1.9"/>
<circle cx="491.3" cy="54.6" r="0.3" fill="#333"/>
<path d="M491.3 48 V49.6"/>
<rect x="529.9" y="49" width="2.8" height="2.6" rx="0.5"/>
<path d="M536.6 48.6 L539.7 50.3 L537.6 51.9 L536.4 51.9 Z"/>
<circle cx="531.2" cy="56.9" r="1.5"/>
<circle cx="537.4" cy="56.9" r="1.5"/>
<path d="M532.7 50.3 H536.3 M537.5 51.9 V55.4 M532.7 56.9 H535.9"/>
<path d="M585 57.8 L588.2 49.1 L591.4 57.8 M586.3 54.7 H590.2" stroke-width="1"/>
<rect x="592.7" y="53.6" width="3.8" height="4" rx="1.6" stroke-width="1"/>
<path d="M596.5 53.5 V57.9" stroke-width="1"/>
<path d="M711.6 50.8 L708.3 53.3 L711.6 55.8 M716.3 48.5 L713.3 57.5 M718.4 51 L720.7 53.3 L718.4 55.7"/>
</g>
<g stroke="#fff" stroke-opacity="0.85" stroke-width="1.05">
<rect x="654.5" y="49.3" width="8.8" height="8.3" rx="1.2"/>
<path d="M657.6 52.6 V56.5 M661.2 53 a1 0.8 0 0 0 -1.6 0.6 c0 1 1.7 0.9 1.7 1.9 a1 0.8 0 0 1 -1.8 0.4" stroke-width="0.8"/>
</g>
<g stroke="#555" stroke-width="1.1">
<rect x="803.2" y="49" width="9.6" height="8.5" rx="0.9"/>
<path d="M805.4 51.3 L807.4 53.3 L805.4 55.4" stroke-width="1"/>
<path d="M808.6 55.6 H810.8" stroke-width="1.1"/>
</g>
<path d="M765.5 49 V58" stroke="#555" stroke-width="1"/>
</svg>
<div class="tb" style="left:142px;top:46px">刷新</div>
<div class="tb" style="left:316px;top:46px;color:#7d7d7d">100%</div>
<div class="tb" style="left:501px;top:46px">AI</div>
<div class="tb" style="left:545px;top:46px">蓝图</div>
<div class="tb" style="left:600px;top:46px">样式表</div>
<div class="tb" style="left:669px;top:46px;color:#fff;-webkit-text-stroke:0">脚本</div>
<div class="tb" style="left:724px;top:46px">模板</div>
</div></body></html>
